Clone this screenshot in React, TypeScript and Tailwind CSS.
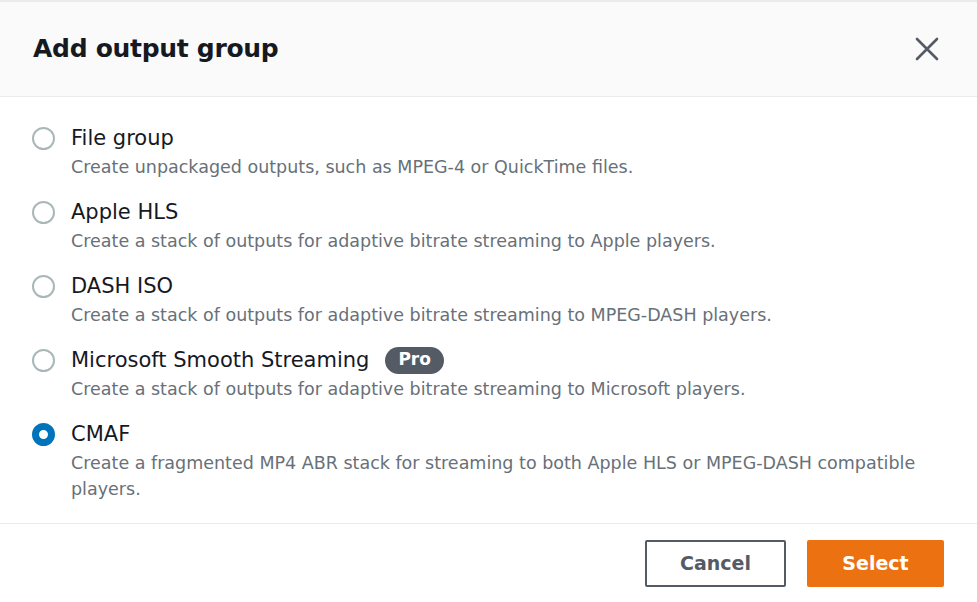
import { useState } from "react";

const options = [
  {
    id: "file",
    label: "File group",
    desc: "Create unpackaged outputs, such as MPEG-4 or QuickTime files.",
  },
  {
    id: "hls",
    label: "Apple HLS",
    desc: "Create a stack of outputs for adaptive bitrate streaming to Apple players.",
  },
  {
    id: "dash",
    label: "DASH ISO",
    desc: "Create a stack of outputs for adaptive bitrate streaming to MPEG-DASH players.",
  },
  {
    id: "mss",
    label: "Microsoft Smooth Streaming",
    desc: "Create a stack of outputs for adaptive bitrate streaming to Microsoft players.",
    pro: true,
  },
  {
    id: "cmaf",
    label: "CMAF",
    desc: "Create a fragmented MP4 ABR stack for streaming to both Apple HLS or MPEG-DASH compatible players.",
  },
];

export default function App() {
  const [selected, setSelected] = useState("cmaf");

  return (
    <div className="w-[977px] h-[602px] bg-white overflow-hidden font-['DejaVu_Sans',sans-serif] text-[#16191f]">
      {/* Header */}
      <div className="h-[97px] bg-[#fafafa] border-t-2 border-b border-[#e9ebed] flex items-center justify-between pl-[33px] pr-[36px]">
        <h2 className="text-[25px] font-bold tracking-[-0.3px]">Add output group</h2>
        <button className="w-[28px] h-[28px] flex items-center justify-center text-[#545b64]">
          <svg width="24" height="24" viewBox="0 0 24 24" fill="none" stroke="currentColor" strokeWidth="2.6" strokeLinecap="round">
            <path d="M2 2L22 22M22 2L2 22" />
          </svg>
        </button>
      </div>

      {/* Options */}
      <div className="pt-[25px] pb-[21px] pl-[32px] pr-[28px] flex flex-col gap-[16px] border-b border-[#e9ebed]">
        {options.map((o) => {
          const on = selected === o.id;
          return (
            <label key={o.id} className="flex gap-[16px] cursor-pointer" onClick={() => setSelected(o.id)}>
              <div className="h-[32px] flex items-center shrink-0">
                {on ? (
                  <span className="w-[23px] h-[23px] rounded-full border-[7px] border-[#0073bb] bg-white" />
                ) : (
                  <span className="w-[23px] h-[23px] rounded-full border-2 border-[#aab7b8] bg-white" />
                )}
              </div>
              <div className="flex flex-col">
                <div className="h-[32px] flex items-center gap-[16px]">
                  <span className="text-[21px] leading-[32px]">{o.label}</span>
                  {o.pro && (
                    <span className="h-[27px] px-[13px] rounded-full bg-[#545b64] text-white text-[17px] font-bold flex items-center">
                      Pro
                    </span>
                  )}
                </div>
                <p className="text-[17.5px] leading-[26px] text-[#687078]">{o.desc}</p>
              </div>
            </label>
          );
        })}
      </div>

      {/* Footer */}
      <div className="flex justify-end gap-[21px] pt-[16px] pr-[33px]">
        <button className="w-[141px] h-[47px] rounded-[2px] border-2 border-[#545b64] text-[#545b64] text-[19px] font-bold bg-white">
          Cancel
        </button>
        <button className="w-[137px] h-[47px] rounded-[2px] bg-[#ec7211] text-white text-[19px] font-bold">
          Select
        </button>
      </div>
    </div>
  );
}
